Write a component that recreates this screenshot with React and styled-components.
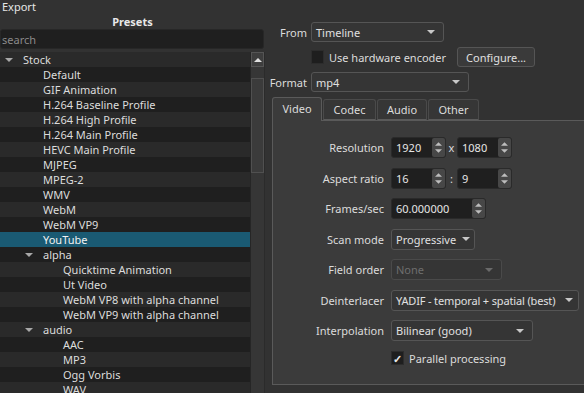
import styled, { createGlobalStyle } from 'styled-components';

const GlobalStyle = createGlobalStyle`
  html, body {
    margin: 0;
    background: #323232;
  }
  body {
    font-family: "Noto Sans", "Open Sans", sans-serif;
    font-size: 11px;
    color: #dcdcdc;
  }
`;

const presets = [
    { label: 'Stock', level: 0, group: true },
    { label: 'Default', level: 1 },
    { label: 'GIF Animation', level: 1 },
    { label: 'H.264 Baseline Profile', level: 1 },
    { label: 'H.264 High Profile', level: 1 },
    { label: 'H.264 Main Profile', level: 1 },
    { label: 'HEVC Main Profile', level: 1 },
    { label: 'MJPEG', level: 1 },
    { label: 'MPEG-2', level: 1 },
    { label: 'WMV', level: 1 },
    { label: 'WebM', level: 1 },
    { label: 'WebM VP9', level: 1 },
    { label: 'YouTube', level: 1, selected: true },
    { label: 'alpha', level: 1, group: true },
    { label: 'Quicktime Animation', level: 2 },
    { label: 'Ut Video', level: 2 },
    { label: 'WebM VP8 with alpha channel', level: 2 },
    { label: 'WebM VP9 with alpha channel', level: 2 },
    { label: 'audio', level: 1, group: true },
    { label: 'AAC', level: 2 },
    { label: 'MP3', level: 2 },
    { label: 'Ogg Vorbis', level: 2 },
    { label: 'WAV', level: 2 },
];

const Arrow = ({ up, color = '#c8c8c8', w = 8, h = 4 }) => (
    <ArrowSvg width={w} height={h} viewBox="0 0 8 4">
        {up ? <polygon points="0,4 8,4 4,0" fill={color} /> : <polygon points="0,0 8,0 4,4" fill={color} />}
    </ArrowSvg>
);

const Export = () => {
    return (
        <>
            <GlobalStyle />
            <Window>
                <TitleBar>Export</TitleBar>
                <Body>
                    <PresetsPanel>
                        <PanelHeader>Presets</PanelHeader>
                        <Search placeholder="search" />
                        <TreeWrap>
                            <Tree>
                                {presets.map((p, i) => (
                                    <TreeRow key={p.label} $odd={i % 2 === 1} $selected={p.selected}>
                                        <Expander $level={p.level}>
                                            {p.group && <Arrow color="#a8a8a8" />}
                                        </Expander>
                                        {p.label}
                                    </TreeRow>
                                ))}
                            </Tree>
                            <ScrollBar>
                                <ScrollButton><Arrow up color="#e0e0e0" /></ScrollButton>
                                <ScrollGap />
                                <ScrollHandle />
                            </ScrollBar>
                        </TreeWrap>
                    </PresetsPanel>

                    <Settings>
                        <TopForm>
                            <FieldLabel>From</FieldLabel>
                            <Combo $width={133}>Timeline<Arrow /></Combo>

                            <span />
                            <InlineRow>
                                <CheckBox />
                                <CheckLabel>Use hardware encoder</CheckLabel>
                                <Button>Configure...</Button>
                            </InlineRow>

                            <FieldLabel>Format</FieldLabel>
                            <Combo $width={158}>mp4<Arrow /></Combo>
                        </TopForm>

                        <Tabs>
                            <Tab $active $width={50}>Video</Tab>
                            <Tab $width={53}>Codec</Tab>
                            <Tab $width={50}>Audio</Tab>
                            <Tab $width={51}>Other</Tab>
                        </Tabs>
                        <TabPanel>
                            <VideoForm>
                                <FormLabel>Resolution</FormLabel>
                                <InlineRow>
                                    <Spin $width={55}>1920<Spinner /></Spin>
                                    <Sep>x</Sep>
                                    <Spin $width={55}>1080<Spinner /></Spin>
                                </InlineRow>

                                <FormLabel>Aspect ratio</FormLabel>
                                <InlineRow>
                                    <Spin $width={55}>16<Spinner /></Spin>
                                    <Sep>:</Sep>
                                    <Spin $width={55}>9<Spinner /></Spin>
                                </InlineRow>

                                <FormLabel>Frames/sec</FormLabel>
                                <Spin $width={95}>60.000000<Spinner /></Spin>

                                <FormLabel>Scan mode</FormLabel>
                                <Combo $width={84} $tall>Progressive<Arrow /></Combo>

                                <FormLabel>Field order</FormLabel>
                                <Combo $width={111} $tall $disabled>None<Arrow color="#6a6a6a" /></Combo>

                                <FormLabel>Deinterlacer</FormLabel>
                                <Combo $width={188} $tall $tight>YADIF - temporal + spatial (best)<Arrow /></Combo>

                                <FormLabel>Interpolation</FormLabel>
                                <Combo $width={142} $tall>Bilinear (good)<Arrow /></Combo>

                                <span />
                                <InlineRow>
                                    <CheckBox $checked>✓</CheckBox>
                                    <CheckLabel>Parallel processing</CheckLabel>
                                </InlineRow>
                            </VideoForm>
                        </TabPanel>
                    </Settings>
                </Body>
            </Window>
        </>
    );
};

const Spinner = () => (
    <SpinButtons>
        <Arrow up w={7} h={4} color="#bdbdbd" />
        <Arrow w={7} h={4} color="#bdbdbd" />
    </SpinButtons>
);

//Styled Components
const ArrowSvg = styled.svg`
flex: none;
`

const Window = styled.div`
width: 584px;
height: 393px;
overflow: hidden;
display: flex;
flex-direction: column;
background: #323232;
`

const TitleBar = styled.div`
height: 14px;
line-height: 13px;
padding-left: 2px;
color: #e6e6e6;
`

const Body = styled.div`
flex: 1;
display: flex;
min-height: 0;
`

const PresetsPanel = styled.div`
width: 265px;
display: flex;
flex-direction: column;
`

const PanelHeader = styled.div`
height: 15px;
line-height: 15px;
text-align: center;
font-weight: bold;
color: #e8e8e8;
`

const Search = styled.input`
height: 20px;
box-sizing: border-box;
width: 264px;
margin: 0;
border: 1px solid #272727;
border-radius: 3px;
background: #1f1f1f;
color: #ddd;
font: inherit;
padding: 0 1px;
outline: none;
&::placeholder {
  color: #8a8a8a;
}
`

const TreeWrap = styled.div`
flex: 1;
display: flex;
margin-top: 3px;
min-height: 0;
overflow: hidden;
`

const Tree = styled.div`
width: 251px;
display: flex;
flex-direction: column;
`

const TreeRow = styled.div`
flex: none;
height: 15px;
line-height: 15px;
display: flex;
align-items: center;
white-space: nowrap;
color: ${p => (p.$selected ? '#f2f2f2' : '#dcdcdc')};
background: ${p => (p.$selected ? '#1a5a73' : p.$odd ? '#1f1f1f' : '#2a2a2a')};
`

const Expander = styled.span`
width: 18px;
margin-left: ${p => 5 + p.$level * 20}px;
display: flex;
align-items: center;
`

const ScrollBar = styled.div`
width: 13px;
display: flex;
flex-direction: column;
background: #363636;
border-left: 1px solid #262626;
border-right: 1px solid #2b2b2b;
`

const ScrollButton = styled.div`
height: 13px;
display: flex;
align-items: center;
justify-content: center;
background: #3e3e3e;
border: 1px solid #555;
`

const ScrollGap = styled.div`
height: 11px;
`

const ScrollHandle = styled.div`
height: 93px;
background: #3b3b3b;
border: 1px solid #505050;
`

const Settings = styled.div`
flex: 1;
display: flex;
flex-direction: column;
padding: 8px 0 0 7px;
`

const TopForm = styled.div`
display: grid;
grid-template-columns: 35px auto;
column-gap: 4px;
row-gap: 5px;
align-items: center;
justify-items: start;
`

const FieldLabel = styled.span`
justify-self: end;
color: #dcdcdc;
`

const Combo = styled.div`
box-sizing: border-box;
width: ${p => p.$width}px;
height: ${p => (p.$tall ? 21 : 20)}px;
display: flex;
align-items: center;
justify-content: space-between;
gap: 6px;
padding: 0 ${p => (p.$tight ? 5 : 8)}px 0 4px;
border: 1px solid ${p => (p.$disabled ? '#4a4a4a' : '#555')};
border-radius: 3px;
background: #353535;
color: ${p => (p.$disabled ? '#6e6e6e' : '#e0e0e0')};
white-space: nowrap;
letter-spacing: ${p => (p.$tight ? '-0.15px' : 'normal')};
`

const InlineRow = styled.div`
display: flex;
align-items: center;
`

const CheckBox = styled.span`
box-sizing: border-box;
width: 13px;
height: 14px;
display: flex;
align-items: center;
justify-content: center;
background: #1e1e1e;
border: 1px solid #2c2c2c;
color: #e8e8e8;
font-size: 11px;
font-weight: bold;
line-height: 1;
`

const CheckLabel = styled.span`
margin-left: 5px;
color: #dcdcdc;
`

const Button = styled.div`
box-sizing: border-box;
height: 20px;
width: 78px;
margin-left: 11px;
display: flex;
align-items: center;
justify-content: center;
border: 1px solid #555;
border-radius: 3px;
background: #3a3a3a;
color: #e0e0e0;
`

const Tabs = styled.div`
display: flex;
align-items: flex-end;
gap: 1px;
margin-top: 5px;
height: 23px;
position: relative;
z-index: 1;
`

const Tab = styled.div`
box-sizing: border-box;
width: ${p => p.$width}px;
height: ${p => (p.$active ? 24 : 21)}px;
display: flex;
align-items: center;
justify-content: center;
padding-bottom: ${p => (p.$active ? 3 : 0)}px;
border: 1px solid ${p => (p.$active ? '#5a5a5a' : '#4a4a4a')};
border-bottom: ${p => (p.$active ? 'none' : '1px solid #5a5a5a')};
border-radius: 3px 3px 0 0;
background: ${p => (p.$active ? '#3b3b3b' : '#363636')};
color: #dcdcdc;
margin-bottom: ${p => (p.$active ? -1 : 0)}px;
`

const TabPanel = styled.div`
height: 265px;
background: #3b3b3b;
border: 1px solid #5a5a5a;
border-right: none;
padding-top: 16px;
box-sizing: border-box;
`

const VideoForm = styled.div`
display: grid;
grid-template-columns: 111px auto;
column-gap: 7px;
row-gap: 9.5px;
align-items: center;
justify-items: start;
`

const FormLabel = styled.span`
justify-self: end;
color: #dcdcdc;
`

const Spin = styled.div`
box-sizing: border-box;
width: ${p => p.$width}px;
height: 21px;
display: flex;
align-items: center;
justify-content: space-between;
padding-left: 4px;
border: 1px solid #2a2a2a;
border-radius: 3px;
background: #1f1f1f;
color: #e6e6e6;
`

const SpinButtons = styled.div`
width: 13px;
height: 19px;
display: flex;
flex-direction: column;
align-items: center;
justify-content: center;
gap: 3px;
background: #474747;
border-radius: 2px;
`

const Sep = styled.span`
width: 11px;
text-align: center;
color: #dcdcdc;
`

export default Export;
